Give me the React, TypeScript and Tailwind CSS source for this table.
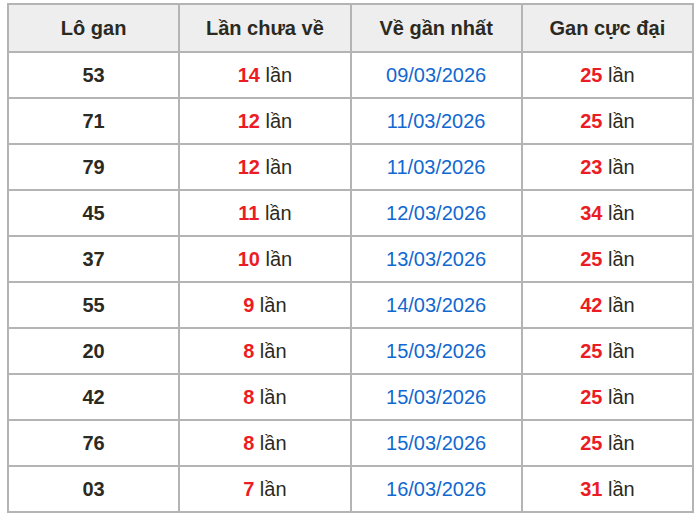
import React from "react";

type Row = { lo: string; chua: number; ve: string; gan: number };

const rows: Row[] = [
  { lo: "53", chua: 14, ve: "09/03/2026", gan: 25 },
  { lo: "71", chua: 12, ve: "11/03/2026", gan: 25 },
  { lo: "79", chua: 12, ve: "11/03/2026", gan: 23 },
  { lo: "45", chua: 11, ve: "12/03/2026", gan: 34 },
  { lo: "37", chua: 10, ve: "13/03/2026", gan: 25 },
  { lo: "55", chua: 9, ve: "14/03/2026", gan: 42 },
  { lo: "20", chua: 8, ve: "15/03/2026", gan: 25 },
  { lo: "42", chua: 8, ve: "15/03/2026", gan: 25 },
  { lo: "76", chua: 8, ve: "15/03/2026", gan: 25 },
  { lo: "03", chua: 7, ve: "16/03/2026", gan: 31 },
];

const th =
  "border-2 border-[#b4b4b4] bg-[#eeeeee] font-bold text-[20px] text-[#2b2a22] h-[48px] text-center";
const td = "border-2 border-[#b4b4b4] text-[20px] h-[46px] text-center";

export default function App() {
  return (
    <div
      className="bg-white w-[700px] h-[520px] pt-[3px] pl-[7px]"
      style={{ fontFamily: '"Liberation Sans", Arial, sans-serif' }}
    >
      <table className="border-collapse w-[687px] table-fixed">
        <thead>
          <tr>
            <th className={th}>Lô gan</th>
            <th className={th}>Lần chưa về</th>
            <th className={th}>Về gần nhất</th>
            <th className={th}>Gan cực đại</th>
          </tr>
        </thead>
        <tbody>
          {rows.map((r, i) => (
            <tr key={i}>
              <td className={`${td} font-bold text-[#2b2a22]`}>{r.lo}</td>
              <td className={`${td} text-[#2b2a22]`}>
                <span className="font-bold text-[#ec1c24]">{r.chua}</span> lần
              </td>
              <td className={`${td} text-[#1168d0]`}>{r.ve}</td>
              <td className={`${td} text-[#2b2a22]`}>
                <span className="font-bold text-[#ec1c24]">{r.gan}</span> lần
              </td>
            </tr>
          ))}
        </tbody>
      </table>
    </div>
  );
}
